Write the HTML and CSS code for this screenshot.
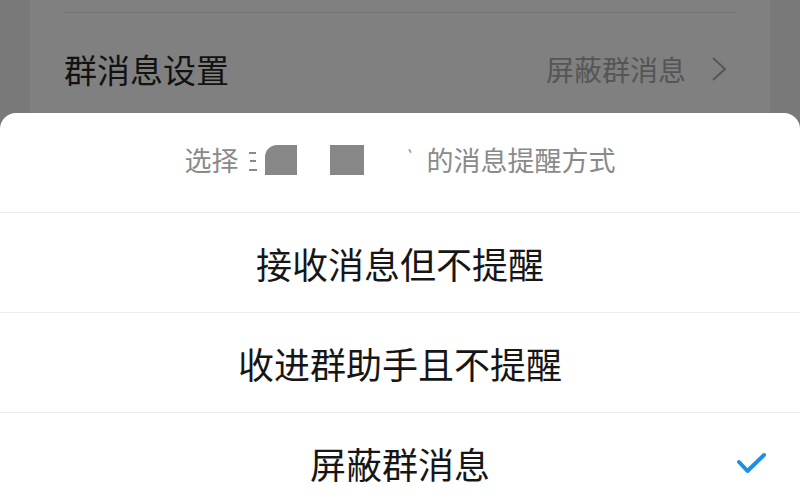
FILE: index.html
```html
<!DOCTYPE html>
<html lang="zh-CN">
<head>
<meta charset="utf-8">
<link rel="stylesheet" href="styles.css">
</head>
<body>
<div class="page">
  <div class="card">
    <div class="divider-top"></div>
    <div class="setting-row">
      <span class="setting-label">群消息设置</span>
      <span class="setting-value">屏蔽群消息
        <svg class="chevron" width="16" height="24" viewBox="0 0 16 24"><polyline points="2,1 14,12 2,23" fill="none" stroke="#555" stroke-width="2"/></svg>
      </span>
    </div>
  </div>
</div>
<div class="sheet">
  <div class="sheet-title">
    <span class="t">选择</span>
    <span class="redact-partial"></span>
    <span class="block block-a"></span>
    <span class="block block-b"></span>
    <span class="tick"></span>
    <span class="t">的消息提醒方式</span>
  </div>
  <div class="option"><span class="opt-text">接收消息但不提醒</span></div>
  <div class="option"><span class="opt-text">收进群助手且不提醒</span></div>
  <div class="option"><span></span><span class="opt-text">屏蔽群消息</span>
    <svg class="check" width="31" height="24" viewBox="0 0 31 24"><polyline points="3,11 11.5,20 28,4" fill="none" stroke="#1e8fe3" stroke-width="4" stroke-linecap="round" stroke-linejoin="round"/></svg>
  </div>
</div>
</body>
</html>
```
FILE: styles.css
```css
html, body {
  margin: 0;
  padding: 0;
}
body {
  width: 800px;
  height: 500px;
  overflow: hidden;
  position: relative;
  background: #797979;
  font-family: "Noto Sans CJK SC", "Noto Sans", sans-serif;
}
.page {
  padding: 0 30px;
  height: 500px;
}
.card {
  background: #808080;
  height: 500px;
  padding-top: 12px;
}
.divider-top {
  height: 1px;
  background: #747474;
  margin: 0 35px 0 33px;
}
.setting-row {
  display: flex;
  align-items: center;
  justify-content: space-between;
  height: 112px;
  padding: 0 43px 0 34px;
}
.setting-label {
  font-size: 33px;
  line-height: 1;
  color: #121212;
}
.setting-value {
  display: flex;
  align-items: center;
  font-size: 28px;
  line-height: 1;
  color: #555;
}
.chevron {
  margin-left: 25px;
}
.sheet {
  position: absolute;
  top: 113px;
  left: 0;
  right: 0;
  bottom: 0;
  background: #fff;
  border-radius: 16px 16px 0 0;
}
.sheet-title {
  border-bottom: 1px solid #ececec;
  display: flex;
  align-items: center;
  justify-content: center;
  padding-bottom: 6px;
  box-sizing: border-box;
  height: 100px;
  font-size: 27px;
  line-height: 1;
  color: #8a8a8a;
}
.redact-partial {
  display: inline-block;
  width: 8px;
  height: 20px;
  margin-left: 10px;
  margin-top: 2px;
  background:
    linear-gradient(#8a8a8a, #8a8a8a) 0 1px / 7px 2px no-repeat,
    linear-gradient(#8a8a8a, #8a8a8a) 1px 9px / 6px 2px no-repeat,
    linear-gradient(#8a8a8a, #8a8a8a) 0 18px / 8px 2px no-repeat;
}
.block {
  display: inline-block;
  height: 30px;
  background: #878787;
}
.block-a {
  width: 32px;
  margin-left: 8px;
  border-top-left-radius: 12px;
}
.block-b {
  width: 34px;
  margin-left: 33px;
}
.tick {
  display: inline-block;
  width: 2px;
  height: 4px;
  background: #aaa;
  margin: 0 16px 18px 45px;
  transform: rotate(-30deg);
}
.option {
  height: 99px;
  border-bottom: 1px solid #ececec;
  display: flex;
  align-items: center;
  justify-content: center;
}
.option:last-child {
  display: grid;
  grid-template-columns: 1fr auto 1fr;
  align-items: center;
}
.opt-text {
  font-size: 36px;
  line-height: 1;
  color: #161616;
}
.check {
  justify-self: end;
  margin-right: 33px;
}
```
